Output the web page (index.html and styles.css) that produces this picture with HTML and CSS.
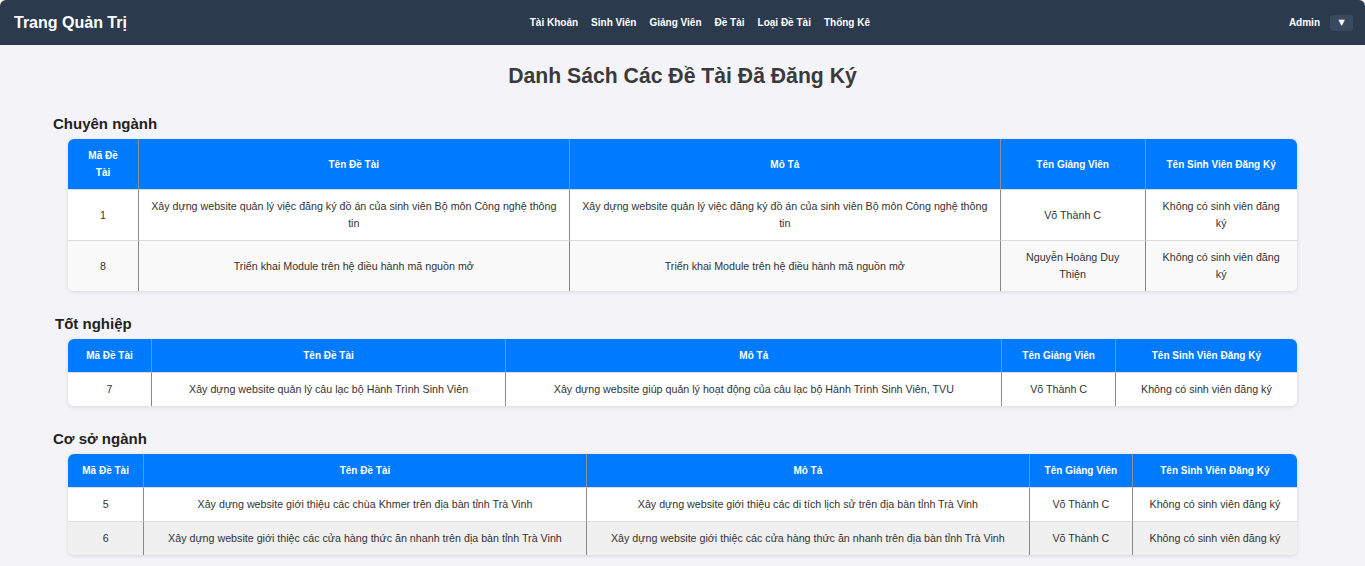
FILE: index.html
```html
<!DOCTYPE html>
<html lang="vi">
<head>
<meta charset="utf-8">
<title>Trang Quản Trị</title>
<link rel="stylesheet" href="styles.css">
</head>
<body>
<header class="topbar">
  <div class="brand">Trang Quản Trị</div>
  <nav class="nav">
    <a href="#">Tài Khoản</a>
    <a href="#">Sinh Viên</a>
    <a href="#">Giảng Viên</a>
    <a href="#">Đề Tài</a>
    <a href="#">Loại Đề Tài</a>
    <a href="#">Thống Kê</a>
  </nav>
  <div class="user">
    <span class="user-name">Admin</span>
    <button class="user-toggle">▼</button>
  </div>
</header>

<main class="content">
  <h1 class="page-title">Danh Sách Các Đề Tài Đã Đăng Ký</h1>

  <section class="group">
    <h2 class="group-title">Chuyên ngành</h2>
    <table class="topics">
      <thead>
        <tr><th>Mã Đề Tài</th><th>Tên Đề Tài</th><th>Mô Tả</th><th>Tên Giảng Viên</th><th>Tên Sinh Viên Đăng Ký</th></tr>
      </thead>
      <tbody>
        <tr><td>1</td><td>Xây dựng website quản lý việc đăng ký đồ án của sinh viên Bộ môn Công nghệ thông tin</td><td>Xây dựng website quản lý việc đăng ký đồ án của sinh viên Bộ môn Công nghệ thông tin</td><td>Võ Thành C</td><td>Không có sinh viên đăng ký</td></tr>
        <tr><td>8</td><td>Triển khai Module trên hệ điều hành mã nguồn mở</td><td>Triển khai Module trên hệ điều hành mã nguồn mở</td><td>Nguyễn Hoàng Duy Thiện</td><td>Không có sinh viên đăng ký</td></tr>
      </tbody>
    </table>
  </section>

  <section class="group">
    <h2 class="group-title shifted">Tốt nghiệp</h2>
    <table class="topics">
      <thead>
        <tr><th>Mã Đề Tài</th><th>Tên Đề Tài</th><th>Mô Tả</th><th>Tên Giảng Viên</th><th>Tên Sinh Viên Đăng Ký</th></tr>
      </thead>
      <tbody>
        <tr><td>7</td><td>Xây dựng website quản lý câu lạc bộ Hành Trình Sinh Viên</td><td>Xây dựng website giúp quản lý hoạt động của câu lạc bộ Hành Trình Sinh Viên, TVU</td><td>Võ Thành C</td><td>Không có sinh viên đăng ký</td></tr>
      </tbody>
    </table>
  </section>

  <section class="group">
    <h2 class="group-title">Cơ sở ngành</h2>
    <table class="topics grey">
      <thead>
        <tr><th>Mã Đề Tài</th><th>Tên Đề Tài</th><th>Mô Tả</th><th>Tên Giảng Viên</th><th>Tên Sinh Viên Đăng Ký</th></tr>
      </thead>
      <tbody>
        <tr><td>5</td><td>Xây dựng website giới thiệu các chùa Khmer trên địa bàn tỉnh Trà Vinh</td><td>Xây dựng website giới thiệu các di tích lịch sử trên địa bàn tỉnh Trà Vinh</td><td>Võ Thành C</td><td>Không có sinh viên đăng ký</td></tr>
        <tr><td>6</td><td>Xây dựng website giới thiệc các cửa hàng thức ăn nhanh trên địa bàn tỉnh Trà Vinh</td><td>Xây dựng website giới thiệc các cửa hàng thức ăn nhanh trên địa bàn tỉnh Trà Vinh</td><td>Võ Thành C</td><td>Không có sinh viên đăng ký</td></tr>
      </tbody>
    </table>
  </section>
</main>
</body>
</html>
```

FILE: styles.css
```css
* { box-sizing: border-box; }

html, body {
  margin: 0;
  padding: 0;
}

body {
  background: #f4f4f8;
  font-family: "Liberation Sans", Arial, sans-serif;
  color: #333;
}

.topbar {
  height: 45px;
  background: #2c3a4e;
  display: flex;
  align-items: center;
  justify-content: space-between;
  padding: 0 12px 0 14px;
  border-top-left-radius: 6px;
  border-top-right-radius: 6px;
}

.brand {
  color: #fff;
  font-weight: bold;
  font-size: 16px;
}

.nav {
  display: flex;
  gap: 13px;
  margin-right: 16px;
}

.nav a {
  color: #fff;
  text-decoration: none;
  font-size: 10px;
  font-weight: bold;
}

.user {
  display: flex;
  align-items: center;
  gap: 10px;
}

.user-name {
  color: #fff;
  font-size: 10px;
  font-weight: bold;
}

.user-toggle {
  width: 23px;
  height: 16px;
  border: none;
  border-radius: 3px;
  background: #3a4a5e;
  color: #fff;
  font-size: 8px;
  line-height: 16px;
  padding: 0;
  font-family: "DejaVu Sans", sans-serif;
}

.content {
  padding: 16px 0 10px;
}

.page-title {
  margin: 0;
  text-align: center;
  font-size: 21.2px;
  line-height: 30px;
  color: #3a3a3a;
  font-weight: bold;
}

.group {
  margin-top: 24px;
}

.group + .group {
  margin-top: 24px;
}

.group-title {
  margin: 0 0 6px 53px;
  font-size: 15px;
  line-height: 18px;
  color: #222;
  font-weight: bold;
}

.group-title.shifted {
  margin-left: 55px;
}

.topics {
  width: 90%;
  margin: 0 auto;
  border-collapse: separate;
  border-spacing: 0;
  background: #fff;
  border-radius: 6px;
  overflow: hidden;
  box-shadow: 0 1px 4px rgba(0, 0, 0, 0.12);
  font-size: 10px;
  text-align: center;
}

.topics th {
  background: #007bff;
  color: #fff;
  font-weight: bold;
  line-height: 17px;
  padding: 8px 12px;
  border-left: 1px solid #8a8f99;
}

.topics td {
  font-size: 10.7px;
  line-height: 17px;
  padding: 8px 12px;
  color: #333;
  border-left: 1px solid #888;
  border-top: 1px solid #ddd;
}

.topics th:first-child,
.topics td:first-child {
  border-left: none;
}

.topics tbody tr:nth-child(even) td {
  background: #f9f9f9;
}

.topics.grey tbody tr:nth-child(even) td {
  background: #f0f0f0;
}
```
